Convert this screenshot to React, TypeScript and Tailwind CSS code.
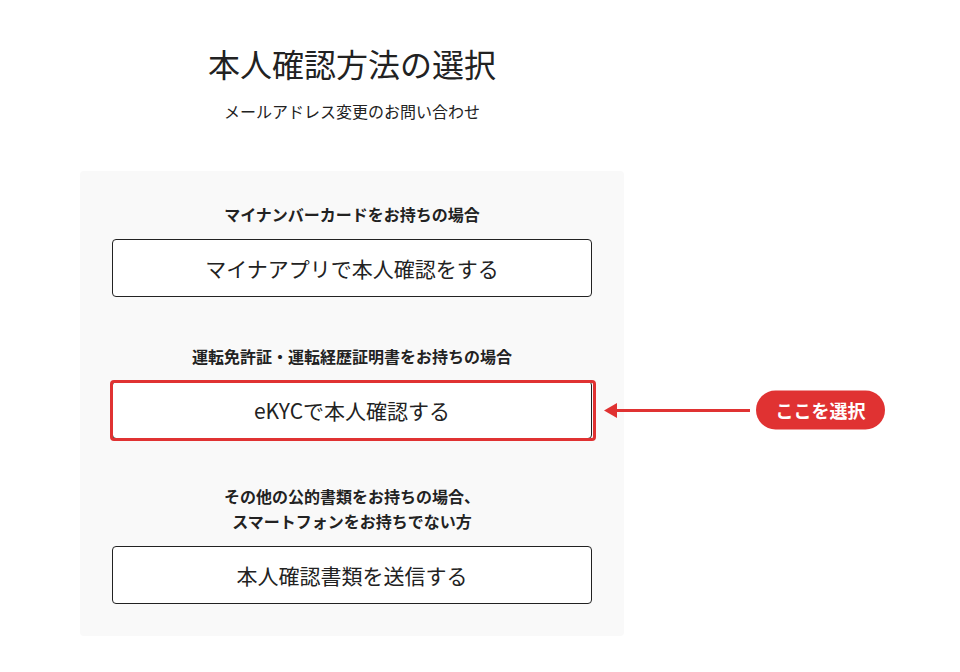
import React from 'react';

const font = { fontFamily: '"Noto Sans CJK JP", "Noto Sans", sans-serif' };

const OptionButton = ({ label }: { label: string }) => (
  <button className="w-full h-[58px] bg-white border border-[#222] rounded-[4px] text-[21px] text-[#222] leading-none">
    {label}
  </button>
);

export default function App() {
  return (
    <main style={font} className="min-h-[672px] bg-white text-[#222]">
      <div className="ml-[80px] w-[544px] flex flex-col items-center pt-[39px]">
        <h1 className="text-[32px] leading-[48px] font-normal">本人確認方法の選択</h1>
        <p className="mt-[12px] text-[16px] leading-[24px]">メールアドレス変更のお問い合わせ</p>

        <section className="mt-[48px] w-full bg-[#f9f9f9] rounded-[4px] px-[32px] pt-[30px] pb-[32px] flex flex-col">
          {/* マイナンバーカード */}
          <h2 className="text-center text-[16px] leading-[26px] font-bold">マイナンバーカードをお持ちの場合</h2>
          <div className="mt-[12px]">
            <OptionButton label="マイナアプリで本人確認をする" />
          </div>

          {/* 運転免許証 */}
          <h2 className="mt-[46px] text-center text-[16px] leading-[26px] font-bold">
            運転免許証・運転経歴証明書をお持ちの場合
          </h2>
          <div className="mt-[12px] relative">
            <OptionButton label="eKYCで本人確認する" />
            <div className="absolute left-[-2px] right-[-4px] top-[-1px] bottom-[-2px] border-[3px] border-[#e03232] rounded-[4px] pointer-events-none" />
            <div className="absolute left-[calc(100%+12px)] top-1/2 -translate-y-1/2 flex items-center">
              <svg width="146" height="16" viewBox="0 0 146 16" className="block">
                <polygon points="0,8 13,0.5 13,15.5" fill="#e03232" />
                <line x1="12" y1="8" x2="146" y2="8" stroke="#e03232" strokeWidth="3" />
              </svg>
              <span className="ml-[6px] w-[129px] h-[39px] rounded-full bg-[#e03232] text-white text-[18px] font-bold flex items-center justify-center whitespace-nowrap">
                ここを選択
              </span>
            </div>
          </div>

          {/* その他 */}
          <h2 className="mt-[45px] text-center text-[16px] leading-[25px] font-bold">
            その他の公的書類をお持ちの場合、
            <br />
            スマートフォンをお持ちでない方
          </h2>
          <div className="mt-[12px]">
            <OptionButton label="本人確認書類を送信する" />
          </div>
        </section>
      </div>
    </main>
  );
}
